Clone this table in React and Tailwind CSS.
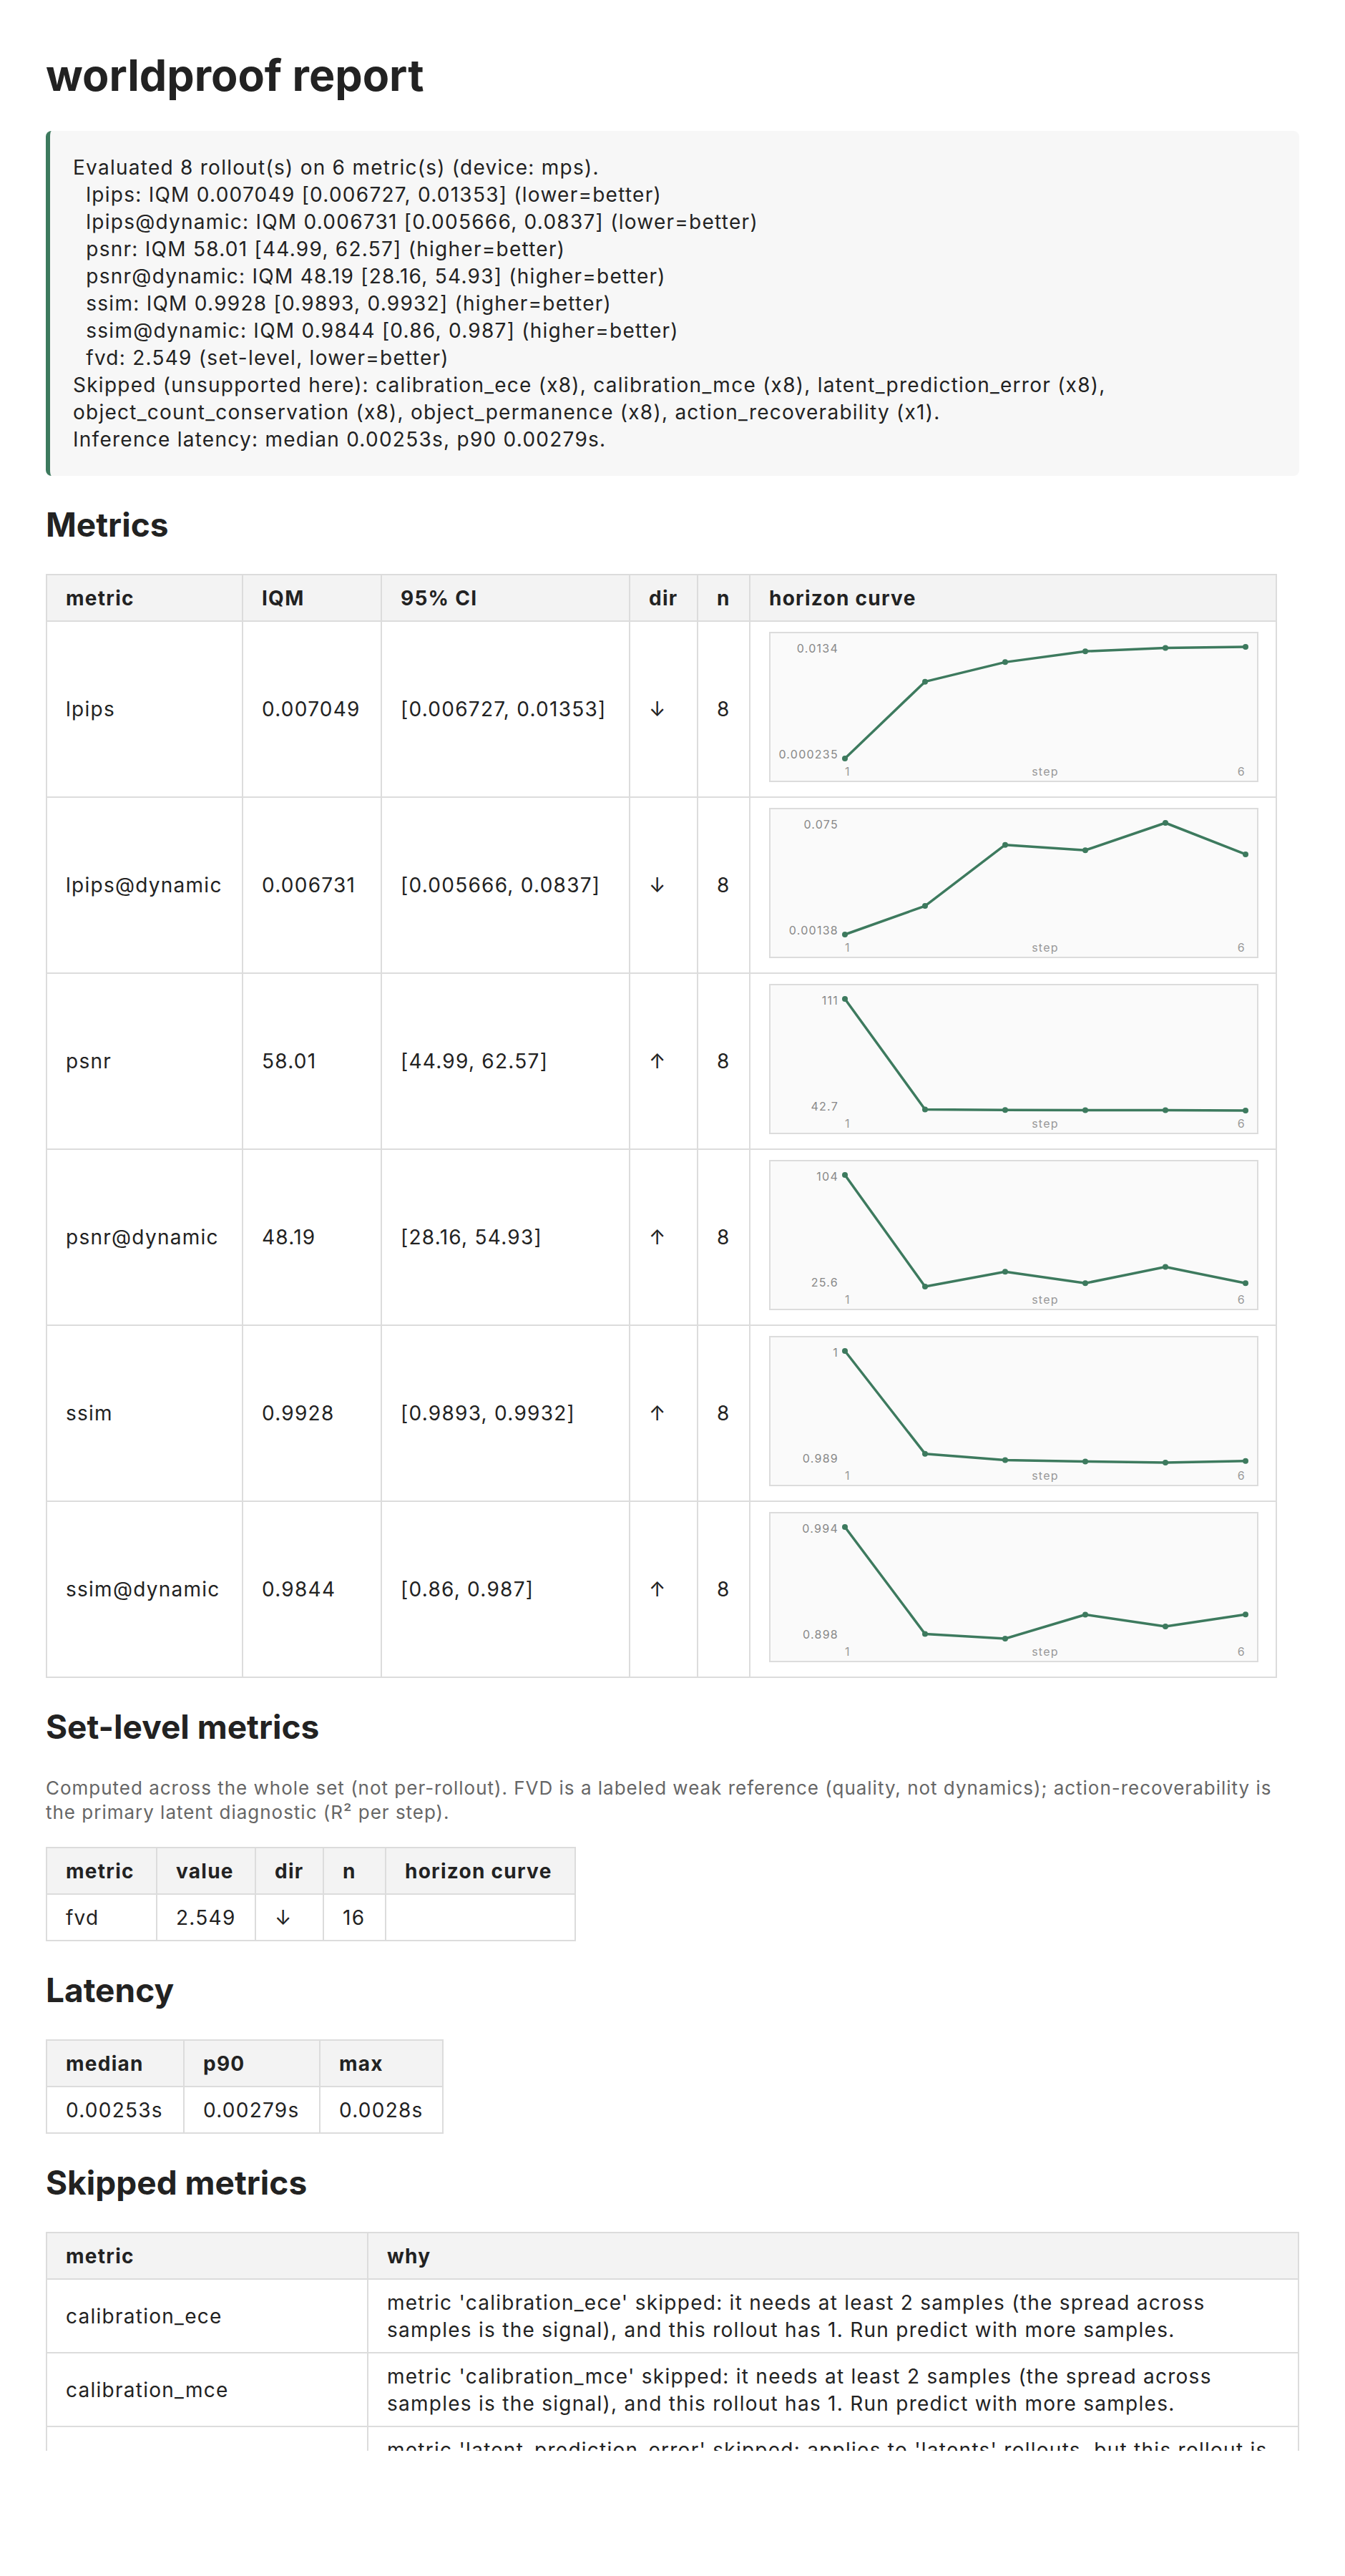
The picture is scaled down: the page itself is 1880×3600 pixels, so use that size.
const GREEN = '#3d7a5e';

const summary = `Evaluated 8 rollout(s) on 6 metric(s) (device: mps).
  lpips: IQM 0.007049 [0.006727, 0.01353] (lower=better)
  lpips@dynamic: IQM 0.006731 [0.005666, 0.0837] (lower=better)
  psnr: IQM 58.01 [44.99, 62.57] (higher=better)
  psnr@dynamic: IQM 48.19 [28.16, 54.93] (higher=better)
  ssim: IQM 0.9928 [0.9893, 0.9932] (higher=better)
  ssim@dynamic: IQM 0.9844 [0.86, 0.987] (higher=better)
  fvd: 2.549 (set-level, lower=better)
Skipped (unsupported here): calibration_ece (x8), calibration_mce (x8), latent_prediction_error (x8), object_count_conservation (x8), object_permanence (x8), action_recoverability (x1).
Inference latency: median 0.00253s, p90 0.00279s.`;

// curve values are normalised 0..1 between the lo and hi labels
const metrics = [
  { name: 'lpips', iqm: '0.007049', ci: '[0.006727, 0.01353]', dir: '↓', n: 8, hi: '0.0134', lo: '0.000235', curve: [0, 0.688, 0.863, 0.96, 0.99, 1] },
  { name: 'lpips@dynamic', iqm: '0.006731', ci: '[0.005666, 0.0837]', dir: '↓', n: 8, hi: '0.075', lo: '0.00138', curve: [0, 0.256, 0.803, 0.755, 1, 0.718] },
  { name: 'psnr', iqm: '58.01', ci: '[44.99, 62.57]', dir: '↑', n: 8, hi: '111', lo: '42.7', curve: [1, 0.01, 0.005, 0.003, 0.003, 0] },
  { name: 'psnr@dynamic', iqm: '48.19', ci: '[28.16, 54.93]', dir: '↑', n: 8, hi: '104', lo: '25.6', curve: [1, 0, 0.133, 0.03, 0.176, 0.03] },
  { name: 'ssim', iqm: '0.9928', ci: '[0.9893, 0.9932]', dir: '↑', n: 8, hi: '1', lo: '0.989', curve: [1, 0.079, 0.022, 0.01, 0, 0.015] },
  { name: 'ssim@dynamic', iqm: '0.9844', ci: '[0.86, 0.987]', dir: '↑', n: 8, hi: '0.994', lo: '0.898', curve: [1, 0.042, 0, 0.215, 0.109, 0.217] },
];

const skipped = [
  { name: 'calibration_ece', why: "metric 'calibration_ece' skipped: it needs at least 2 samples (the spread across samples is the signal), and this rollout has 1. Run predict with more samples." },
  { name: 'calibration_mce', why: "metric 'calibration_mce' skipped: it needs at least 2 samples (the spread across samples is the signal), and this rollout has 1. Run predict with more samples." },
  { name: 'latent_prediction_error', why: "metric 'latent_prediction_error' skipped: applies to 'latents' rollouts, but this rollout is 'pixels'. Run predict with a latent-space model." },
  { name: 'object_count_conservation', why: "metric 'object_count_conservation' skipped: it needs object annotations, and this rollout has none." },
];

const th = 'border-2 border-[#dcdcdc] bg-[#f3f3f3] px-[26px] py-[12.5px] text-left font-bold';
const td = 'border-2 border-[#dcdcdc] px-[26px] py-[12.5px] text-left align-middle';

function Curve({ hi, lo, curve }) {
  const pts = curve.map((t, i) => [106 + i * 112, 177 - t * 156]);
  return (
    <svg width="684" height="210" viewBox="0 0 684 210" className="block">
      <rect x="1" y="1" width="682" height="208" fill="#fafafa" stroke="#dcdcdc" strokeWidth="2" />
      <text x="97" y="28.5" textAnchor="end" fontSize="16" fill="#888">{hi}</text>
      <text x="97" y="176.5" textAnchor="end" fontSize="16" fill="#888">{lo}</text>
      <polyline
        points={pts.map((p) => p.join(',')).join(' ')}
        fill="none"
        stroke={GREEN}
        strokeWidth="3.5"
        strokeLinejoin="round"
      />
      {pts.map(([x, y], i) => (
        <circle key={i} cx={x} cy={y} r="4" fill={GREEN} />
      ))}
      <text x="106" y="200.5" fontSize="16" fill="#999">1</text>
      <text x="386" y="200.5" textAnchor="middle" fontSize="16" fill="#999">step</text>
      <text x="666" y="200.5" textAnchor="end" fontSize="16" fill="#999">6</text>
    </svg>
  );
}

function H2({ children }) {
  return <h2 className="mt-[38px] mb-[39px] text-[46px] leading-[60px] font-bold tracking-normal">{children}</h2>;
}

export default function App() {
  return (
    <div className="h-[3425px] overflow-hidden bg-white font-[family-name:Inter,sans-serif] text-[28px] leading-[38px] tracking-[0.045em] text-[#222]">
      <div className="px-[64px] pt-[69px]">
        <h1 className="mb-[42px] text-[61px] leading-[72px] font-bold tracking-normal">worldproof report</h1>

        <div className="whitespace-pre-wrap rounded-[8px] border-l-[6px] border-[#3d7a5e] bg-[#f7f7f7] p-[32px]">
          {summary}
        </div>

        <H2>Metrics</H2>
        <table className="w-[1719px] table-fixed border-collapse">
          <colgroup>
            <col className="w-[274px]" />
            <col className="w-[194px]" />
            <col className="w-[347px]" />
            <col className="w-[95px]" />
            <col className="w-[73px]" />
            <col className="w-[736px]" />
          </colgroup>
          <thead>
            <tr>
              <th className={th}>metric</th>
              <th className={th}>IQM</th>
              <th className={th}>95% CI</th>
              <th className={th}>dir</th>
              <th className={th}>n</th>
              <th className={th}>horizon curve</th>
            </tr>
          </thead>
          <tbody>
            {metrics.map((m) => (
              <tr key={m.name}>
                <td className={td}>{m.name}</td>
                <td className={td}>{m.iqm}</td>
                <td className={td}>{m.ci}</td>
                <td className={td}>{m.dir}</td>
                <td className={td}>{m.n}</td>
                <td className="border-2 border-[#dcdcdc] px-[26px] pt-[14px] pb-[20px]">
                  <Curve hi={m.hi} lo={m.lo} curve={m.curve} />
                </td>
              </tr>
            ))}
          </tbody>
        </table>

        <H2>Set-level metrics</H2>
        <p className="mb-[31px] text-[26px] leading-[34px] tracking-[0.038em] text-[#666]">
          Computed across the whole set (not per-rollout). FVD is a labeled weak reference (quality, not dynamics); action-recoverability is the primary latent diagnostic (R² per step).
        </p>
        <table className="w-[739px] table-fixed border-collapse">
          <colgroup>
            <col className="w-[154px]" />
            <col className="w-[138px]" />
            <col className="w-[95px]" />
            <col className="w-[87px]" />
            <col className="w-[265px]" />
          </colgroup>
          <thead>
            <tr>
              <th className={th}>metric</th>
              <th className={th}>value</th>
              <th className={th}>dir</th>
              <th className={th}>n</th>
              <th className={th}>horizon curve</th>
            </tr>
          </thead>
          <tbody>
            <tr>
              <td className={td}>fvd</td>
              <td className={td}>2.549</td>
              <td className={td}>↓</td>
              <td className={td}>16</td>
              <td className={td}></td>
            </tr>
          </tbody>
        </table>

        <H2>Latency</H2>
        <table className="w-[554px] table-fixed border-collapse">
          <colgroup>
            <col className="w-[192px]" />
            <col className="w-[190px]" />
            <col className="w-[172px]" />
          </colgroup>
          <thead>
            <tr>
              <th className={th}>median</th>
              <th className={th}>p90</th>
              <th className={th}>max</th>
            </tr>
          </thead>
          <tbody>
            <tr>
              <td className={td}>0.00253s</td>
              <td className={td}>0.00279s</td>
              <td className={td}>0.0028s</td>
            </tr>
          </tbody>
        </table>

        <H2>Skipped metrics</H2>
        <table className="w-full table-fixed border-collapse">
          <colgroup>
            <col className="w-[449px]" />
            <col />
          </colgroup>
          <thead>
            <tr>
              <th className={th}>metric</th>
              <th className={th}>why</th>
            </tr>
          </thead>
          <tbody>
            {skipped.map((s) => (
              <tr key={s.name}>
                <td className={td}>{s.name}</td>
                <td className={td}>{s.why}</td>
              </tr>
            ))}
          </tbody>
        </table>
      </div>
    </div>
  );
}
